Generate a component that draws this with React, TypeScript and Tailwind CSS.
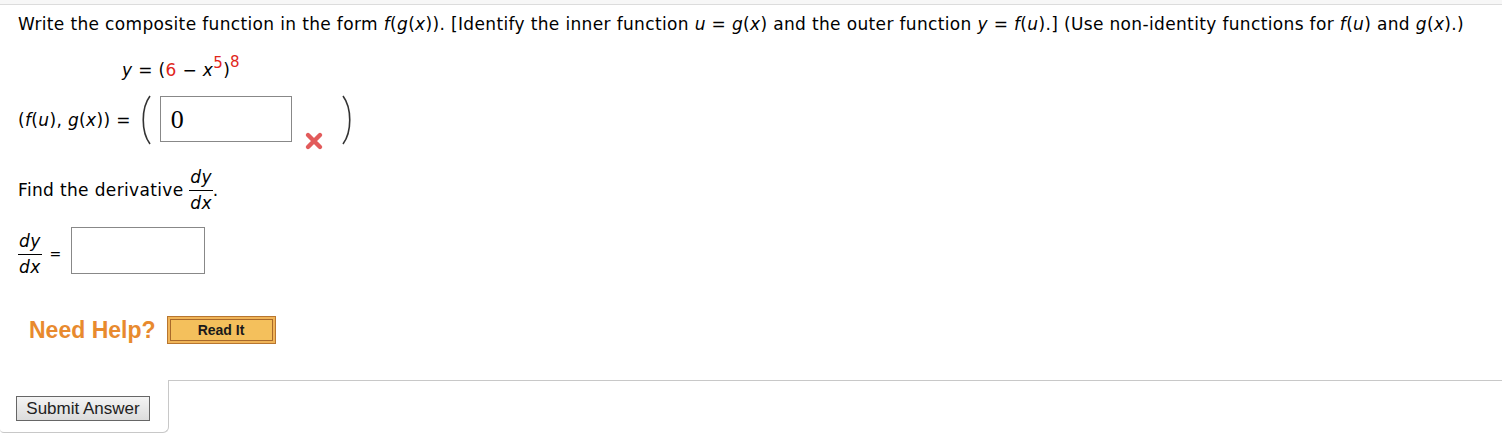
import React from "react";

const verdana = { fontFamily: '"DejaVu Sans", Verdana, sans-serif' };

function Frac({ top, bottom }: { top: string; bottom: string }) {
  return (
    <span className="inline-flex flex-col items-center align-middle leading-none">
      <span className="italic px-[1px] pb-[4px]">{top}</span>
      <span className="block h-px w-full bg-black" />
      <span className="italic px-[1px] pt-[4px]">{bottom}</span>
    </span>
  );
}

function Paren({ right }: { right?: boolean }) {
  return (
    <svg width="14" height="52" viewBox="0 0 14 52" className="shrink-0">
      <path
        d={right ? "M3 2 C 12 14, 12 38, 3 50" : "M11 2 C 2 14, 2 38, 11 50"}
        fill="none"
        stroke="#333"
        strokeWidth="1.6"
      />
    </svg>
  );
}

function RedX() {
  return (
    <svg width="22" height="22" viewBox="0 0 22 22">
      <path d="M5 5 L17 17 M17 5 L5 17" stroke="#e25b5b" strokeWidth="4.4" strokeLinecap="round" />
    </svg>
  );
}

export default function App() {
  return (
    <div className="w-[1502px] h-[440px] bg-white text-black overflow-hidden" style={verdana}>
      <div className="h-[5px] bg-[#f7f7f7] border-b border-[#dcdcdc]" />

      <div className="pl-[18px] text-[17px] tracking-[0.35px]">
        <p className="mt-[9px] leading-[20px] whitespace-nowrap">
          Write the composite function in the form <i>f</i>(<i>g</i>(<i>x</i>)). [Identify the inner function{" "}
          <i>u</i> = <i>g</i>(<i>x</i>) and the outer function <i>y</i> = <i>f</i>(<i>u</i>).] (Use non-identity
          functions for <i>f</i>(<i>u</i>) and <i>g</i>(<i>x</i>).)
        </p>

        <p className="mt-[26px] ml-[104px] leading-[20px]">
          <i>y</i> = (<span className="text-[#e0261b]">6</span> − <i>x</i>
          <sup className="text-[#e0261b] text-[15px] top-[-8px]">5</sup>)
          <sup className="text-[#e0261b] text-[15px] top-[-9px]">8</sup>
        </p>

        <div className="mt-[11px] flex items-start h-[56px]">
          <span className="mt-[17px]">
            (<i>f</i>(<i>u</i>), <i>g</i>(<i>x</i>)) =
          </span>
          <span className="ml-[8px] mt-[3px]">
            <Paren />
          </span>
          <div
            className="ml-[7px] mt-[5px] w-[132px] h-[46px] border border-[#888] flex items-center pl-[10px] text-[26px] tracking-normal"
            style={{ fontFamily: '"Liberation Serif", serif' }}
          >
            0
          </div>
          <div className="ml-[11px] mt-[39px]">
            <RedX />
          </div>
          <span className="ml-[15px] mt-[3px]">
            <Paren right />
          </span>
        </div>

        <div className="mt-[22px] flex items-center">
          <span>Find the derivative&nbsp;</span>
          <Frac top="dy" bottom="dx" />
          <span className="self-center">.</span>
        </div>

        <div className="mt-[15px] flex items-start">
          <div className="mt-[6px] flex items-center">
            <Frac top="dy" bottom="dx" />
            <span className="ml-[8px] text-[14px]">=</span>
          </div>
          <div className="ml-[9px] w-[134px] h-[47px] border border-[#888]" />
        </div>

        <div className="mt-[37px] flex items-center" style={{ fontFamily: '"Liberation Sans", Arial, sans-serif' }}>
          <span className="ml-[11px] text-[23px] font-bold text-[#e88a2e] tracking-normal">Need Help?</span>
          <button className="ml-[11px] w-[109px] h-[28px] bg-[#f0b458] border border-[#b8762f] p-[2px]">
            <span className="flex h-full w-full items-center justify-center border border-[#a8692a] bg-[#f4c05c] text-[14px] font-bold text-[#1a1a1a] tracking-normal">
              Read It
            </span>
          </button>
        </div>
      </div>

      <div className="mt-[32px] flex items-start">
        <div className="w-[169px] h-[53px] border-r border-b border-[#c8c8c8] rounded-br-[6px] rounded-bl-[4px] pl-[16px] pt-[16px]">
          <button
            className="w-[134px] h-[25px] border border-[#666] bg-gradient-to-b from-[#f4f4f4] to-[#dcdcdc] text-[17px] text-[#222] leading-none"
            style={{ fontFamily: '"Liberation Sans", Arial, sans-serif' }}
          >
            Submit Answer
          </button>
        </div>
        <div className="flex-1 border-t border-[#c8c8c8]" />
      </div>
    </div>
  );
}
